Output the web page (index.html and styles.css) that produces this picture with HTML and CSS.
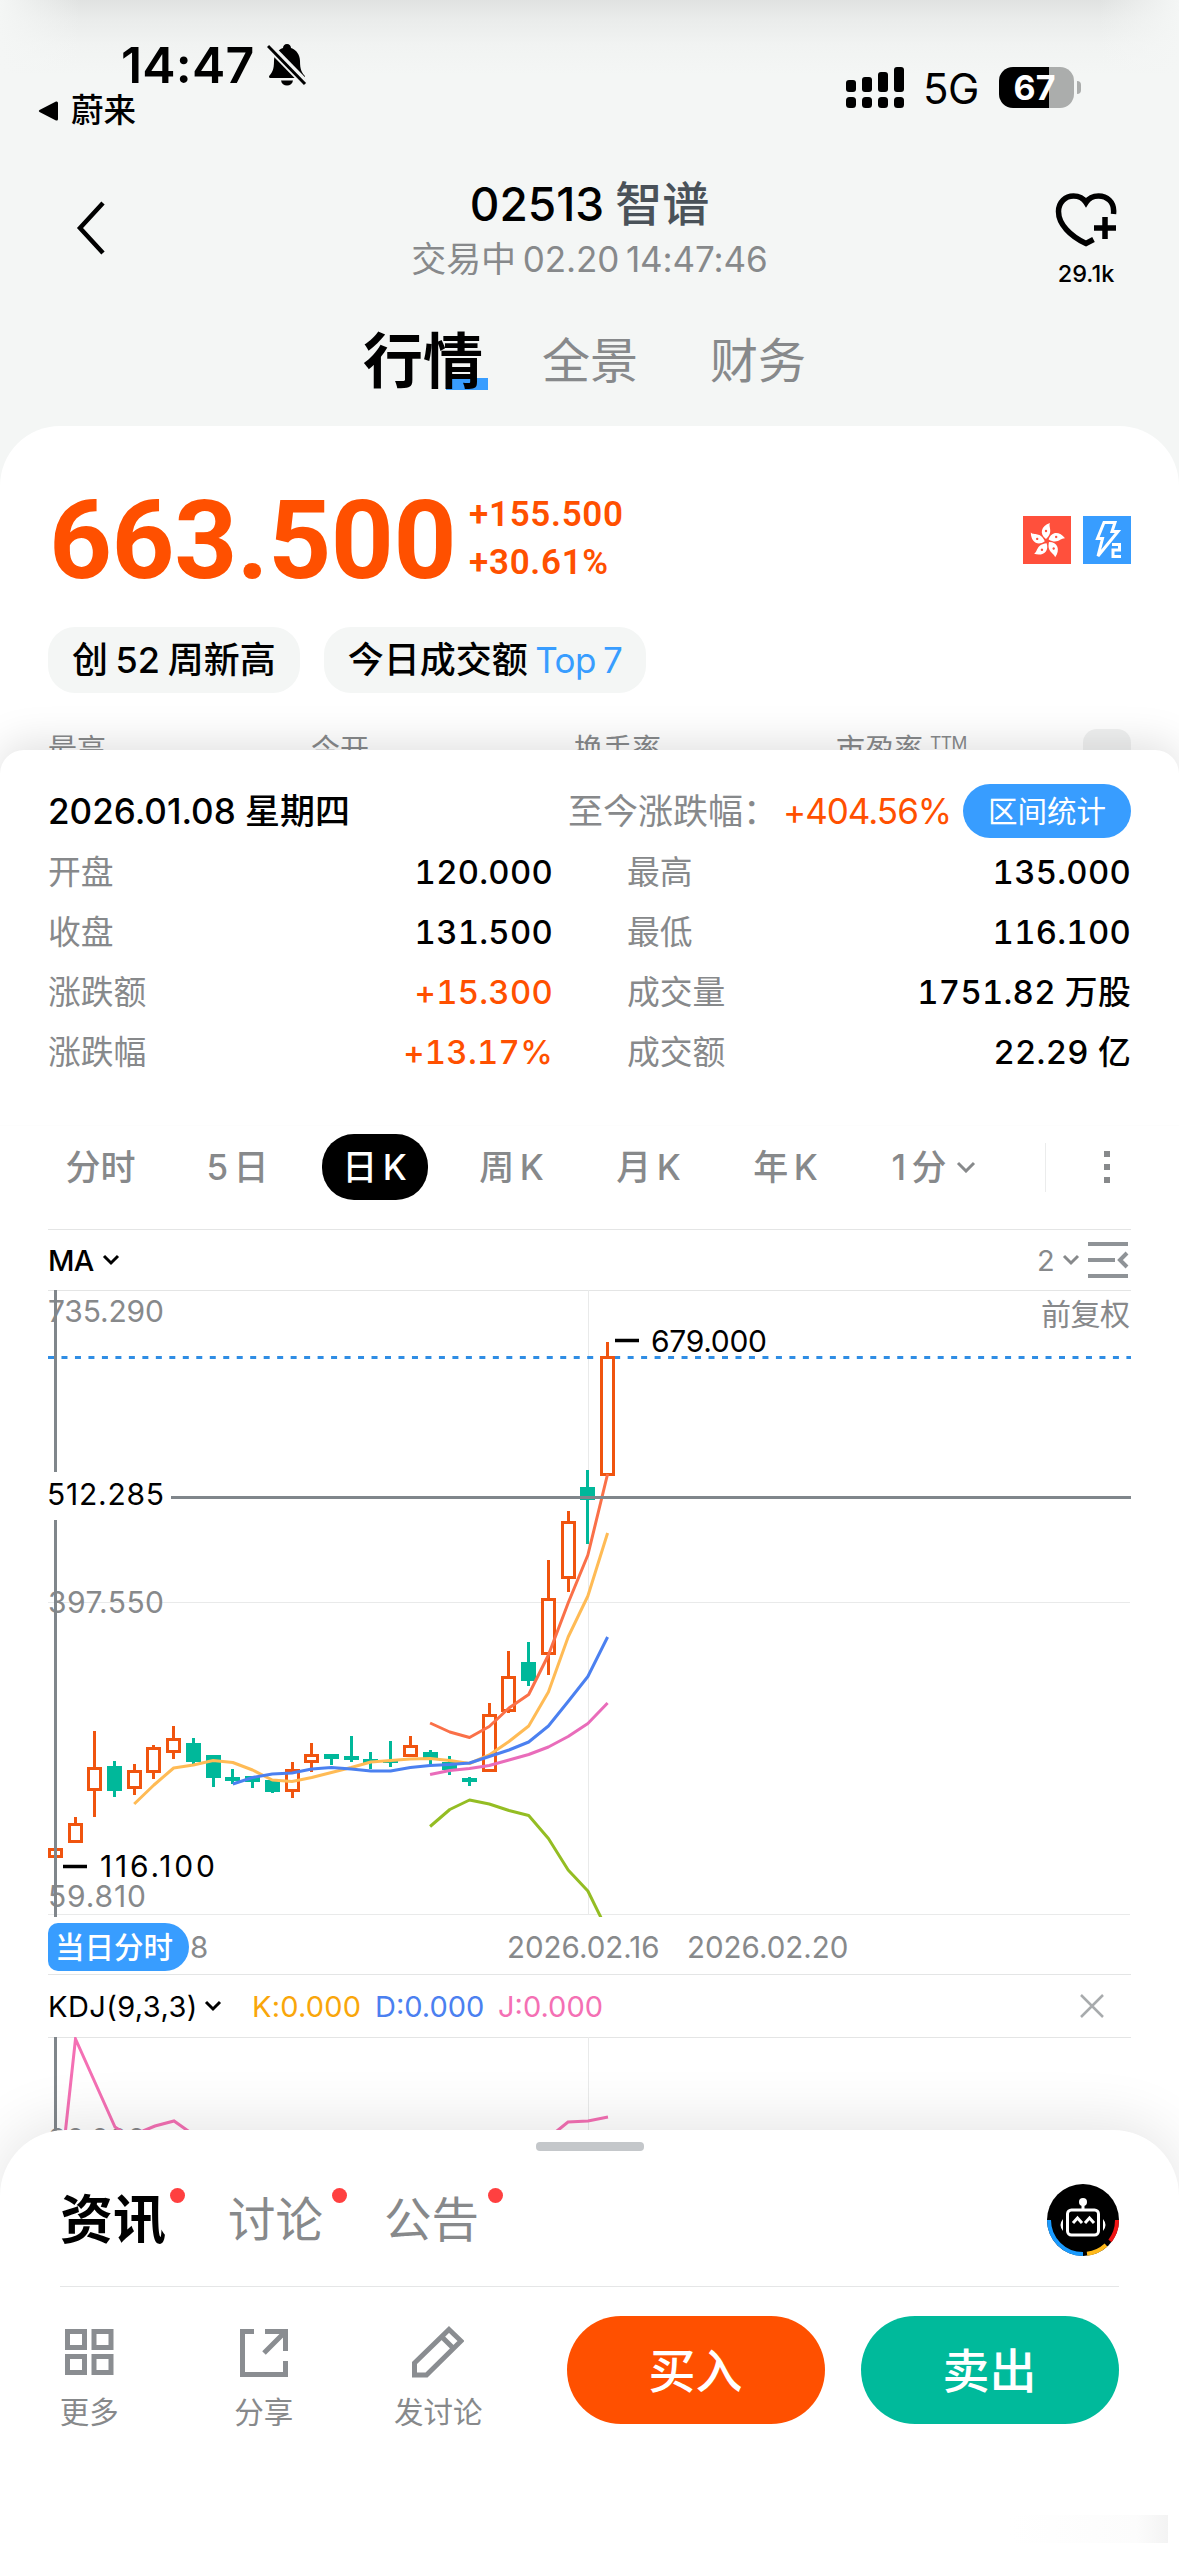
FILE: index.html
```html
<!DOCTYPE html>
<html lang="zh-CN">
<head>
  <meta charset="UTF-8">
  <title>02513 智谱</title>
  <link rel="stylesheet" href="styles.css">
</head>
<body>

  <!-- Header -->
  <header class="header">
    <div class="status">
      <div class="status-left">
        <div class="clock">
          <span>14:47</span>
          <svg width="40" height="44" viewBox="0 0 40 44">
            <path d="M20 1c2.500 0 4 1.800 4 4 5.500 1.800 9 7 9 13 0 9 2 11.500 4.500 14.500 1 1.500.500 2.500-1 2.500h-33c-1.500 0-2-1-1-2.500C5 29.500 7 27 7 18c0-6 3.500-11.200 9-13 0-2.200 1.500-4 4-4z"/>
            <path d="M14 37.500h12c-.5 3.200-3 5-6 5s-5.500-1.800-6-5z"/>
            <path d="M0 1l40 41" class="bell-gap"/>
            <path d="M1 3l37 38" class="bell-slash"/>
          </svg>
        </div>
        <div class="back-app">
          <svg width="20" height="20" viewBox="0 0 20 20"><path d="M1.500 9Q0 10 1.500 11L18 19.500Q20 20 20 18V2Q20 0 18 .500z"/></svg>
          <span>蔚来</span>
        </div>
      </div>
      <div class="status-right">
        <svg width="58" height="41" viewBox="0 0 58 41">
          <rect x="0" y="13" width="10" height="12" rx="3"/><rect x="0" y="30" width="10" height="11" rx="3.500"/>
          <rect x="16" y="10" width="10" height="15" rx="3"/><rect x="16" y="30" width="10" height="11" rx="3.500"/>
          <rect x="32" y="5" width="10" height="20" rx="3"/><rect x="32" y="30" width="10" height="11" rx="3.500"/>
          <rect x="48" y="0" width="10" height="25" rx="3"/><rect x="48" y="30" width="10" height="11" rx="3.500"/>
        </svg>
        <span class="network">5G</span>
        <span class="battery">67</span>
        <span class="battery-tip"></span>
      </div>
    </div>

    <div class="nav">
      <svg class="nav-back" width="32" height="56" viewBox="0 0 32 56"><path d="M28 3L5 28l23 25"/></svg>
      <div class="nav-title">
        <h1><span>02513</span><b>智谱</b></h1>
        <p>交易中 02.20 14:47:46</p>
      </div>
      <div class="nav-fav">
        <svg width="62" height="56" viewBox="0 0 62 56">
          <path d="M58.500 22C60 9 51 4 43.500 4 37.500 4 33.500 6.500 31 10.500 28.500 6.500 24.500 4 18.500 4 10.500 4 3.500 10 3.500 19.500 3.500 32 15 44 31 51.500l7.500-4" class="heart"/>
          <path d="M39 36h22M50 25v22" class="plus"/>
        </svg>
        <span>29.1k</span>
      </div>
    </div>

    <nav class="tabs">
      <a class="tab active">行情</a>
      <a class="tab">全景</a>
      <a class="tab">财务</a>
    </nav>
  </header>

  <!-- Quote -->
  <section class="quote">
    <div class="price-row">
      <div class="price">663.500</div>
      <div class="change">
        <span>+155.500</span>
        <span class="pct">+30.61%</span>
      </div>
      <svg width="48" height="48" viewBox="0 0 48 48">
        <rect width="48" height="48" fill="#ff503c"/>
        <g id="flower" transform="translate(24 25)"></g>
      </svg>
      <svg width="48" height="48" viewBox="0 0 48 48">
        <rect width="48" height="48" fill="#389dff"/>
        <path d="M21 6.500h11l-3 9h6L15 40l4.500-17.500H14.500z" class="bolt"/>
        <path d="M29 28.500h7.500v5.500H30v6.500h8" class="bolt-two"/>
      </svg>
    </div>
    <div class="chips">
      <span class="chip">创 52 周新高</span>
      <span class="chip">今日成交额 <i>Top 7</i></span>
    </div>
    <div class="stats">
      <span>最高</span>
      <span>今开</span>
      <span>换手率</span>
      <span>市盈率<sup>TTM</sup></span>
      <i class="stats-more"></i>
    </div>
  </section>

  <!-- Selected day -->
  <section class="day">
    <div class="day-head">
      <span class="day-date">2026.01.08 星期四</span>
      <span class="day-since">至今涨跌幅：</span>
      <span class="day-gain">+404.56%</span>
      <button class="range-btn">区间统计</button>
    </div>
    <dl class="day-grid">
      <dt>开盘</dt><dd>120.000</dd>
      <dt>最高</dt><dd>135.000</dd>
      <dt>收盘</dt><dd>131.500</dd>
      <dt>最低</dt><dd>116.100</dd>
      <dt>涨跌额</dt><dd class="up">+15.300</dd>
      <dt>成交量</dt><dd>1751.82 万股</dd>
      <dt>涨跌幅</dt><dd class="up">+13.17%</dd>
      <dt>成交额</dt><dd>22.29 亿</dd>
    </dl>
  </section>

  <!-- Chart period -->
  <div class="periods">
    <a>分时</a>
    <a>5 日</a>
    <a><span class="on">日 K</span></a>
    <a>周 K</a>
    <a>月 K</a>
    <a>年 K</a>
    <a class="minute">1 分<svg class="chev" width="20" height="12" viewBox="0 0 20 12"><path d="M2 2l8 8 8-8"/></svg></a>
    <i class="sep"></i>
    <svg class="dots" width="8" height="34" viewBox="0 0 8 34"><path d="M1 1h6v6H1zM1 14h6v6H1zM1 27h6v6H1z"/></svg>
  </div>

  <div class="bar ma-bar">
    <span>MA</span>
    <svg class="chev" width="18" height="12" viewBox="0 0 18 12"><path d="M2 2l7 7 7-7"/></svg>
    <span class="lines-count">2</span>
    <svg class="chev gray" width="18" height="12" viewBox="0 0 18 12"><path d="M2 2l7 7 7-7"/></svg>
    <svg class="list-icon" width="42" height="38" viewBox="0 0 42 38"><path d="M0 3h40M0 19h27M0 35h40M39 12l-7 7 7 7"/></svg>
  </div>

  <svg class="chart" id="kline" width="1179" height="627" viewBox="0 0 1179 627">
    <path class="grid" d="M588.500 0v624M48 312.500h1082M48 624.500h1082"/>
    <text class="axis" x="48" y="32" textLength="116">735.290</text>
    <text class="axis" x="48" y="323" textLength="116">397.550</text>
    <text class="axis" x="48" y="617" textLength="98">59.810</text>
    <text class="axis" x="1041" y="35" textLength="89">前复权</text>
    <path class="last" d="M48 67.500h1083"/>
    <g id="candles"></g>
    <g id="averages"></g>
    <path class="cross" d="M55.500 0v182M55.500 230v397M171 207.500h960"/>
    <path class="mark" d="M615 50.500h24M63 576.500h24"/>
    <text class="value" x="651" y="62" textLength="116">679.000</text>
    <text class="value" x="47" y="215" textLength="117">512.285</text>
    <text class="value" x="100" y="587" textLength="115">116.100</text>
  </svg>

  <div class="dates">
    <span class="day-tag">当日分时</span>
    <span class="date-tail">8</span>
    <span class="date-a">2026.02.16</span>
    <span>2026.02.20</span>
  </div>

  <div class="bar kdj-bar">
    <span class="kdj-name">KDJ(9,3,3)</span>
    <svg class="chev" width="18" height="12" viewBox="0 0 18 12"><path d="M2 2l7 7 7-7"/></svg>
    <span class="k">K:0.000</span>
    <span class="d">D:0.000</span>
    <span class="j">J:0.000</span>
    <svg class="close" width="26" height="26" viewBox="0 0 26 26"><path d="M2 2l22 22M24 2L2 24"/></svg>
  </div>

  <svg class="kdj" width="1179" height="153" viewBox="0 0 1179 153">
    <path class="grid" d="M588.500 0v152"/>
    <text class="axis" x="48" y="113" textLength="98">80.000</text>
    <path class="j-line" d="M65 98L75.500 2 115 90l9 6 19-2 12-5 19-5 17 12M552 98l16-13 20-1 20-4"/>
    <path class="cross" d="M55.500 0v152"/>
  </svg>

  <!-- Bottom sheet -->
  <footer class="sheet">
    <i class="handle"></i>
    <div class="feeds">
      <a class="feed active">资讯</a>
      <a class="feed">讨论</a>
      <a class="feed">公告</a>
      <svg class="robot" width="72" height="72" viewBox="0 0 72 72">
        <circle cx="36" cy="36" r="36"/>
        <path d="M2 36A34 34 0 0 0 36 70" stroke="#1a9bff"/>
        <path d="M40 69.800A34 34 0 0 0 59 61" stroke="#ffb91a"/>
        <path d="M63 57A34 34 0 0 0 70 36" stroke="#f01414"/>
        <g class="bot">
          <circle cx="36" cy="18" r="4"/>
          <path d="M34.500 20h3v6h-3zM16 35q-5 6 0 12zM56 35q5 6 0 12z"/>
          <rect x="20.500" y="26" width="31" height="25" rx="4" class="face"/>
          <path d="M26 39l4.500-5 4.500 5M38 39l4.500-5 4.500 5" class="eyes"/>
        </g>
      </svg>
    </div>
    <div class="actions">
      <a class="action">
        <svg width="52" height="52" viewBox="0 0 52 52"><path d="M4.500 5.500h17v16h-17zM31 5.500h17v16H31zM4.500 30.500h17v16h-17zM31 30.500h17v16H31z"/></svg>
        更多
      </a>
      <a class="action">
        <svg width="52" height="52" viewBox="0 0 52 52"><path d="M16 5.500H4.500v43h43V35M27 5.500h20.500V25M47 6L26 27"/></svg>
        分享
      </a>
      <a class="action">
        <svg width="52" height="52" viewBox="0 0 52 52"><path d="M37 3.500L49 15 14.500 49H2.500V37zM30 11l11 11"/></svg>
        发讨论
      </a>
      <button class="trade buy">买入</button>
      <button class="trade sell">卖出</button>
    </div>
    <i class="corner"></i>
  </footer>

  <script src="script.js"></script>
</body>
</html>
```

FILE: styles.css
```css
* { box-sizing: border-box; }
body {
  margin: 0;
  width: 1179px;
  height: 2556px;
  overflow: hidden;
  background: #fff;
  color: #000;
  font-family: Inter, "Noto Sans CJK SC", sans-serif;
}
h1, p, dl, dd { margin: 0; }
i { font-style: normal; }
svg { display: block; flex: none; }
span, a, dt, dd { white-space: nowrap; }
button { border: none; padding: 0; font-family: inherit; color: #fff; }

/* header */
.header {
  height: 487px;
  background:
    linear-gradient(90deg, #f4f6f5, rgba(244, 246, 245, 0) 80px, rgba(244, 246, 245, 0) 1099px, #f4f6f5) 0 0 / 100% 75px no-repeat,
    linear-gradient(#e0e2e1 0, #eaeceb 20px, #f1f3f2 45px, #f4f6f5 75px);
}
.status {
  display: flex;
  justify-content: space-between;
  height: 150px;
  padding: 40px 98px 0 38px;
}
.clock {
  display: flex;
  align-items: center;
  gap: 12px;
  height: 50px;
  padding-left: 83px;
  font-size: 50px;
  font-weight: 600;
  letter-spacing: 0.2px;
}
.bell-gap { stroke: #f1f3f2; stroke-width: 8; }
.bell-slash { stroke: #000; stroke-width: 3; }
.back-app {
  display: flex;
  align-items: center;
  gap: 13px;
  height: 40px;
  padding-top: 2px;
  font-size: 32.500px;
  font-weight: 500;
  line-height: 40px;
}
.status-right {
  display: flex;
  align-items: center;
  height: 41px;
  margin-top: 27px;
}
.network { width: 95px; padding: 2px 0 0 19px; font-size: 42px; letter-spacing: -0.5px; }
.battery {
  width: 75px;
  height: 41px;
  border-radius: 14px;
  background: linear-gradient(90deg, #000 50px, #abadac 50px);
  color: #fff;
  font-size: 34px;
  font-weight: 700;
  line-height: 42px;
  text-align: center;
  padding-right: 4px;
}
.battery-tip { width: 4px; height: 13px; margin-left: 3px; border-radius: 0 4px 4px 0; background: #abadac; }

.nav { display: grid; grid-template-columns: 250px 1fr 250px; height: 150px; }
.nav-back { margin: 50px 0 0 75px; fill: none; stroke: #000; stroke-width: 4.5; }
.nav-title { padding-top: 24px; text-align: center; }
.nav-title h1 {
  display: flex;
  justify-content: center;
  gap: 11px;
  height: 60px;
  font-size: 46px;
  font-weight: 500;
  line-height: 60px;
}
.nav-title b { font-size: 47px; font-weight: 500; color: #4a5259; }
.nav-title p { height: 50px; color: #87898b; font-size: 35px; line-height: 50px; letter-spacing: -0.1px; word-spacing: -3px; }
.nav-fav {
  display: flex;
  flex-direction: column;
  align-items: center;
  width: 66px;
  margin: 42px 0 0 124px;
}
.nav-fav span { margin-top: 11px; font-size: 23.500px; font-weight: 500; line-height: 30px; }
.heart, .plus { fill: none; stroke: #000; stroke-width: 5.5; }

.tabs { display: flex; align-items: center; gap: 72px; height: 122px; padding-left: 363px; }
.tab { color: #87898b; font-size: 48px; line-height: 60px; }
.tab.active {
  width: 125px;
  margin-right: -18px;
  background: linear-gradient(#389dff, #389dff) right 0 bottom 1px / 42px 12px no-repeat;
  color: #000;
  font-size: 60px;
  font-weight: 700;
}

/* quote */
.quote { height: 324px; margin-top: -61px; border-radius: 60px 60px 0 0; background: #fff; overflow: hidden; }
.price-row { display: flex; align-items: center; height: 201px; padding: 27px 48px 0 49px; gap: 12px; }
.price { width: 403px; padding-top: 2px; color: #ff5000; font: 700 110px/110px Roboto, sans-serif; letter-spacing: -0.5px; }
.change { flex: 1; padding: 0 0 2px 5px; color: #ff5000; font: 600 35px/48px Roboto, sans-serif; letter-spacing: 0.7px; }
.change span { display: block; }
.bolt, .bolt-two { fill: none; stroke: #fff; stroke-width: 3; }
.chips { display: flex; gap: 24px; padding-left: 48px; }
.chip {
  height: 66px;
  padding: 0 24px;
  border-radius: 27px;
  background: #f4f6f5;
  font-size: 36px;
  font-weight: 500;
  line-height: 67px;
  word-spacing: -2px;
}
.chip i { color: #389dff; font-size: 35px; font-weight: 400; letter-spacing: -0.6px; }
.stats {
  display: grid;
  grid-template-columns: 263px 263px 262px 247px 48px;
  height: 57px;
  margin: 36px 0 0 48px;
  color: #87898b;
  font-size: 29px;
  line-height: 42px;
}
.stats sup { margin-left: 7px; font-size: 17.500px; line-height: 10px; letter-spacing: -0.6px; }
.stats-more { height: 40px; border-radius: 14px; background: #f0f1f1; }

/* selected day */
.day {
  position: relative;
  height: 375px;
  padding: 31px 48px 0;
  border-radius: 24px 24px 0 0;
  background: #fff;
  box-shadow: 0 -6px 42px rgba(0, 0, 0, .13);
  clip-path: inset(-80px 0 0 0);
}
.day-head { display: flex; align-items: center; height: 60px; font-size: 35px; line-height: 60px; }
.day-date { flex: 1; font-weight: 500; }
.day-since { color: #87898b; }
.day-gain { color: #ff5000; width: 180px; letter-spacing: -1px; margin-left: 5px; }
.range-btn {
  width: 168px;
  height: 54px;
  border-radius: 27px;
  background: #389dff;
  font-size: 29.500px;
  line-height: 54px;
}
.day-grid {
  display: grid;
  grid-template-columns: 150px 355px 150px 428px;
  margin-top: 1px;
  font-size: 32.800px;
  line-height: 60px;
}
.day-grid dt { color: #87898b; }
.day-grid dd { font-weight: 500; font-variant-numeric: tabular-nums; letter-spacing: 0.3px; text-align: right; }
.day-grid dt:nth-of-type(even) { margin-left: 74px; }
.day-grid .up { color: #ff5000; }

/* periods */
.periods {
  display: flex;
  align-items: center;
  height: 104px;
  padding: 0 0 21px 32px;
  border-top: 1px solid #fdfdfd;
  color: #87898b;
  font-size: 35px;
  line-height: 66px;
  word-spacing: -4px;
}
.periods a { width: 137px; height: 66px; text-align: center; font-weight: 500; }
.periods .minute { display: flex; justify-content: center; align-items: center; gap: 10px; width: 160px; }
.on {
  display: block;
  width: 106px;
  height: 66px;
  margin: 0 auto;
  border-radius: 32px;
  background: #000;
  color: #fff;
}
.sep { width: 1px; height: 49px; margin-left: 31px; background: #ebecec; }
.dots { margin-left: 57px; fill: #87898b; }
.chev { fill: none; stroke: currentColor; stroke-width: 3; }
.gray { color: #87898b; }

/* indicator bars */
.bar {
  display: flex;
  align-items: center;
  margin: 0 48px;
  border: solid #e4e5e5;
  border-width: 1px 0;
  font-size: 29px;
  font-weight: 500;
}
.ma-bar { height: 62px; gap: 8px; letter-spacing: -0.7px; }
.lines-count { margin-left: auto; color: #87898b; font-weight: 400; }
.list-icon { margin-right: 1px; fill: none; stroke: #8f9397; stroke-width: 4; }
.kdj-bar { height: 64px; font-size: 29px; font-weight: 400; }
.kdj-name { width: 156px; letter-spacing: 0.4px; }
.k { width: 123px; margin-left: 30px; color: #f9a60a; letter-spacing: 0.2px; }
.d { width: 123px; color: #4b80f0; }
.j { color: #f470b4; }
.close { margin: 0 26px 0 auto; stroke: #a8abad; stroke-width: 2.5; }

/* charts */
.chart, .kdj { margin-top: -1px; }
.grid { stroke: #e9eaea; stroke-width: 1; fill: none; }
.axis, .value { font-size: 30px; }
.axis { fill: #87898b; }
.cross { stroke: #80868b; stroke-width: 3; fill: none; }
.last { stroke: #2f8de4; stroke-width: 3; stroke-dasharray: 6 7.48; }
.mark { stroke: #000; stroke-width: 3.5; }
.up-candle { fill: #fff; stroke: #f0540f; stroke-width: 3; }
.down-candle { fill: #00b89a; stroke: #00b89a; stroke-width: 2; }
.wick { stroke-width: 3; }
.average { fill: none; stroke-width: 3; stroke-linejoin: round; }
.j-line { fill: none; stroke: #f470b4; stroke-width: 3; }
.dates {
  display: flex;
  align-items: center;
  height: 57px;
  padding: 2px 0 0 48px;
  color: #87898b;
  font-size: 29.500px;
}
.day-tag {
  width: 141px;
  height: 48px;
  padding-left: 7px;
  border-radius: 10px 24px 24px 10px;
  background: #389dff;
  color: #fff;
  font-weight: 500;
  line-height: 48px;
}
.date-tail { padding-left: 1px; width: 318px; }
.date-a { width: 180px; }

/* bottom sheet */
.sheet {
  position: relative;
  height: 426px;
  margin-top: -60px;
  border-radius: 66px 66px 0 0;
  background: #fff;
  box-shadow: 0 -6px 60px rgba(0, 0, 0, .11);
}
.handle { display: block; width: 108px; height: 9px; margin: 0 auto; border-radius: 4px; background: #c4c7ca; transform: translateY(12px); }
.feeds {
  display: flex;
  align-items: center;
  height: 148px;
  margin: 0 60px;
  padding-top: 14px;
  border-bottom: 1px solid #e5e6e7;
}
.feed { position: relative; width: 156px; color: #87898b; font-size: 47.500px; line-height: 70px; }
.feed.active { width: 168px; color: #000; font-size: 53px; font-weight: 700; }
.feed::after {
  content: "";
  position: absolute;
  left: 104px;
  top: 3px;
  width: 15px;
  height: 15px;
  border-radius: 50%;
  background: #ff4040;
}
.feed.active::after { left: 110px; }
.robot { margin-left: auto; fill: none; stroke-width: 4; }
.robot > circle { fill: #000; }
.bot { fill: #fff; }
.bot .face { fill: #000; stroke: #fff; stroke-width: 3; }
.bot .eyes { fill: none; stroke: #fff; stroke-width: 3; }
.actions { display: flex; align-items: flex-start; height: 137px; padding: 29px 0 0 2px; }
.action {
  display: flex;
  flex-direction: column;
  align-items: center;
  width: 174.500px;
  padding-top: 10px;
  color: #87898b;
  font-size: 29.500px;
  line-height: 50px;
}
.action svg { margin-bottom: 9px; fill: none; stroke: #8a8d91; stroke-width: 5; }
.trade { width: 258px; height: 108px; padding-bottom: 6px; border-radius: 54px; font-size: 47px; font-weight: 500; }
.buy { margin-left: 41px; background: #ff5000; }
.sell { margin-left: 36px; background: #00ba9b; }
.corner {
  display: block;
  width: 158px;
  height: 28px;
  margin: 91px 0 0 1010px;
  background: linear-gradient(90deg, #fff, #fcfcfc 80%, #f3f3f3);
}
```

FILE: script.js
```js
const STEP = 19.725;
const X0 = 55.3;
const NS = 'http://www.w3.org/2000/svg';
const xAt = i => X0 + i * STEP;

function add(parent, tag, attrs) {
  const el = document.createElementNS(NS, tag);
  for (const key in attrs) el.setAttribute(key, attrs[key]);
  parent.appendChild(el);
}

// [up, high, body top, body bottom, low]
const candles = [
  [1, 558, 558, 568, 568], [1, 527, 533, 553, 553], [1, 441, 477, 501, 527],
  [0, 471, 476, 501, 507], [1, 474, 480, 499, 505], [1, 455, 457, 483, 489],
  [1, 436, 448, 463, 469], [0, 448, 453, 472, 474], [0, 465, 465, 488, 497],
  [0, 479, 487, 491, 494], [0, 486, 486, 492, 498], [0, 490, 490, 502, 503],
  [1, 472, 479, 502, 508], [1, 453, 464, 473, 482], [0, 464, 464, 469, 475],
  [0, 446, 466, 470, 472], [0, 462, 469, 473, 479], [0, 451, 470, 473, 477],
  [1, 446, 455, 467, 467], [0, 460, 462, 469, 475], [0, 466, 472, 480, 485],
  [0, 487, 488, 492, 496], [1, 413, 424, 482, 482], [1, 361, 386, 422, 423],
  [0, 352, 372, 391, 396], [1, 270, 308, 365, 385], [1, 221, 231, 289, 302],
  [0, 180, 197, 210, 254], [1, 52, 66, 186, 186]
];

const candleGroup = document.getElementById('candles');
candles.forEach(([up, high, top, bottom, low], i) => {
  const cls = up ? 'up-candle' : 'down-candle';
  const x = Math.round(xAt(i) - 0.5) + 0.5;
  const inset = up ? 1.5 : 1;
  add(candleGroup, 'path', { class: cls + ' wick', d: `M${x} ${high}V${low}` });
  add(candleGroup, 'rect', {
    class: cls,
    x: x - 7.5 + inset,
    y: top + inset,
    width: 15 - inset * 2,
    height: bottom - top - inset * 2
  });
});

const averages = [
  { color: '#ffbb55', start: 4, ys: [514, 495, 478, 475, 470.5, 472.5, 480, 490, 491.5, 487.5, 482.5, 477.5, 472, 470.5, 469, 468.5, 470.5, 473.5, 465, 451.5, 436, 402, 347, 306, 243] },
  { color: '#4b80f0', start: 9, ys: [494, 487.5, 484, 483, 479, 477.5, 479, 481, 481, 477.5, 475.5, 474.5, 473, 466.5, 460, 452, 436, 411.5, 386.5, 347] },
  { color: '#e96cba', start: 19, ys: [484.5, 480.5, 478.5, 475.5, 470, 464.5, 457, 446.5, 433.5, 413] },
  { color: '#fa7048', start: 19, ys: [433, 442, 447.5, 436.5, 418, 404.5, 365, 313, 265, 184] },
  { color: '#94bd23', start: 19, ys: [536.5, 519.5, 510, 514, 520.5, 525.5, 548.5, 580, 601, 641] }
];

const averageGroup = document.getElementById('averages');
averages.forEach(({ color, start, ys }) => {
  const points = ys.map((y, n) => `${xAt(start + n)},${y}`).join(' ');
  add(averageGroup, 'polyline', { class: 'average', stroke: color, points });
});

// five petals of the bauhinia
const flower = document.getElementById('flower');
for (let n = 0; n < 5; n++) {
  const turn = `rotate(${n * 72})`;
  add(flower, 'path', { transform: turn, fill: '#fff', d: 'M-1 -2C-8 -7 -6 -15 3 -18C1 -14 7 -9 -1 -2z' });
  add(flower, 'circle', { transform: turn, fill: '#ff503c', cx: -1, cy: -10, r: 1.2 });
}
```
